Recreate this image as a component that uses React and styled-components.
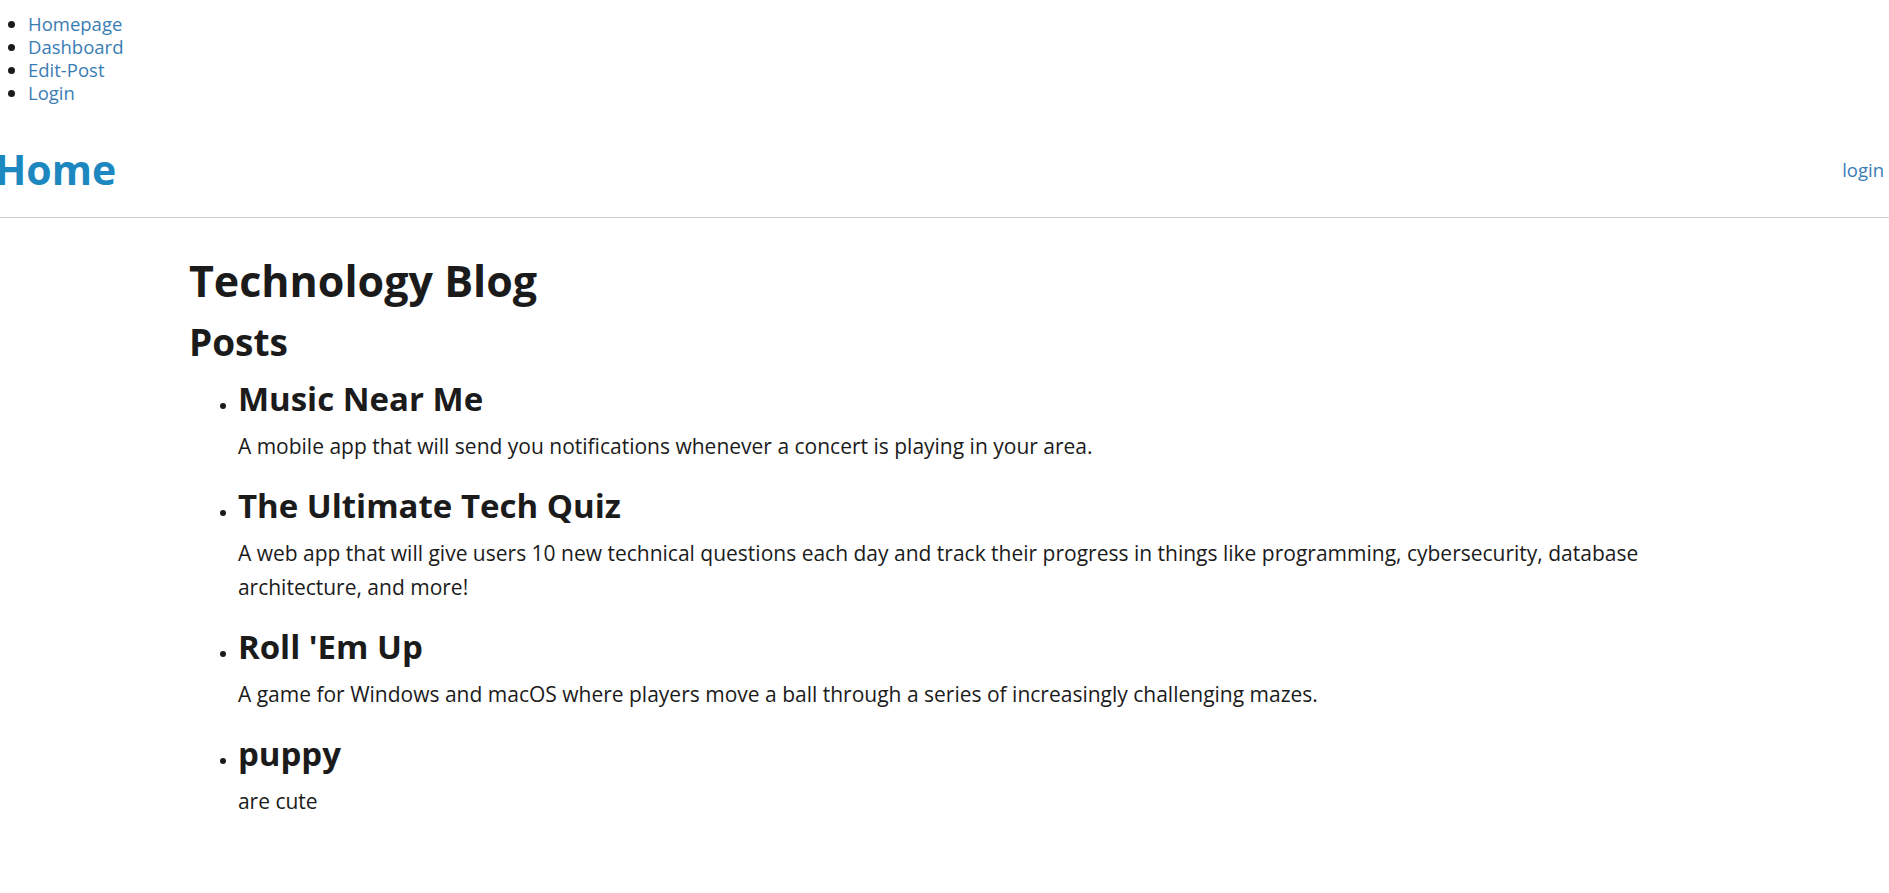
import styled, { createGlobalStyle } from "styled-components";

const GlobalStyle = createGlobalStyle`
  body {
    margin: 0;
    font-family: "Open Sans", "Noto Sans", sans-serif;
    color: #1b1b1b;
    background: #fff;
  }
`;

const NavList = styled.ul`
  margin: 12px 0 0;
  padding-left: 28px;
  font-size: 18.5px;
  line-height: 23px;
`;

const NavLink = styled.a`
  color: #3a7db4;
  text-decoration: none;
`;

const Header = styled.header`
  display: flex;
  justify-content: space-between;
  align-items: center;
  padding: 37px 5px 20px 0;
  border-bottom: 1px solid #d0d0d0;
`;

const Brand = styled.a`
  margin-left: -5px;
  font-size: 41px;
  font-weight: 700;
  color: #1d88bf;
  text-decoration: none;
`;

const LoginLink = styled.a`
  font-size: 18.5px;
  color: #3a7db4;
  text-decoration: none;
`;

const Main = styled.main`
  width: 80%;
  margin: 0 auto;
  padding-top: 35px;
`;

const Title = styled.h1`
  margin: ${(p) => p.gap}px 0 0;
  font-size: ${(p) => p.size}px;
  font-weight: 700;
  line-height: 1.3;
`;

const PostList = styled.ul`
  margin: 0;
  padding-left: 49px;
`;

const Post = styled.li`
  margin-top: 22px;

  &:first-child {
    margin-top: 12px;
  }
`;

const PostTitle = styled.h3`
  margin: 0;
  font-size: 33px;
  font-weight: 700;
  line-height: 1.3;
`;

const PostBody = styled.p`
  margin: 8px 0 0;
  font-size: 21px;
  line-height: 34px;
`;

const posts = [
  {
    title: "Music Near Me",
    body: "A mobile app that will send you notifications whenever a concert is playing in your area.",
  },
  {
    title: "The Ultimate Tech Quiz",
    body: "A web app that will give users 10 new technical questions each day and track their progress in things like programming, cybersecurity, database architecture, and more!",
  },
  {
    title: "Roll 'Em Up",
    body: "A game for Windows and macOS where players move a ball through a series of increasingly challenging mazes.",
  },
  { title: "puppy", body: "are cute" },
];

export default function App() {
  return (
    <>
      <GlobalStyle />
      <NavList>
        <li><NavLink href="#">Homepage</NavLink></li>
        <li><NavLink href="#">Dashboard</NavLink></li>
        <li><NavLink href="#">Edit-Post</NavLink></li>
        <li><NavLink href="#">Login</NavLink></li>
      </NavList>
      <Header>
        <Brand href="#">Home</Brand>
        <LoginLink href="#">login</LoginLink>
      </Header>
      <Main>
        <Title size={43} gap={0}>Technology Blog</Title>
        <Title as="h2" size={37} gap={9}>Posts</Title>
        <PostList>
          {posts.map((post) => (
            <Post key={post.title}>
              <PostTitle>{post.title}</PostTitle>
              <PostBody>{post.body}</PostBody>
            </Post>
          ))}
        </PostList>
      </Main>
    </>
  );
}
